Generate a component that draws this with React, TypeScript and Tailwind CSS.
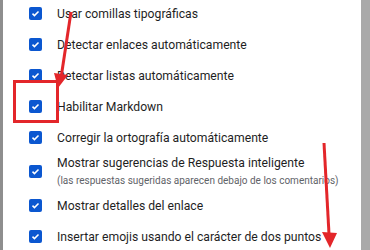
import React from "react";

type Item = { label: string; hint?: string };

const items: Item[] = [
  { label: "Usar comillas tipográficas" },
  { label: "Detectar enlaces automáticamente" },
  { label: "Detectar listas automáticamente" },
  { label: "Habilitar Markdown" },
  { label: "Corregir la ortografía automáticamente" },
  {
    label: "Mostrar sugerencias de Respuesta inteligente",
    hint: "(las respuestas sugeridas aparecen debajo de los comentarios)",
  },
  { label: "Mostrar detalles del enlace" },
  { label: "Insertar emojis usando el carácter de dos puntos" },
];

function Check() {
  return (
    <span className="flex h-[13px] w-[13px] shrink-0 items-center justify-center rounded-[2px] bg-[#0b57d0]">
      <svg width="9" height="9" viewBox="0 0 12 12" fill="none">
        <path d="M2 6.2l2.6 2.6L10 3.4" stroke="white" strokeWidth="2" />
      </svg>
    </span>
  );
}

export default function App() {
  return (
    <div className="flex h-[250px] w-[370px] overflow-hidden bg-white font-['Roboto',sans-serif]">
      <div className="w-[3px] shrink-0 bg-[#8e8e8e]" />
      <div className="relative flex-1">
        <ul className="-mt-[2px] flex flex-col">
          {items.map((it) => (
            <li
              key={it.label}
              className={`flex items-center gap-[15px] pl-[26px] ${it.hint ? "h-[37px]" : "h-[31px]"}`}
            >
              <Check />
              {it.hint ? (
                <div className="flex flex-col">
                  <span className="text-[12.2px] leading-[16px] text-[#1f1f1f] whitespace-nowrap">{it.label}</span>
                  <span className="mt-[3px] text-[10px] leading-[14px] text-[#5f6368] whitespace-nowrap">{it.hint}</span>
                </div>
              ) : (
                <span className="text-[12.2px] leading-[16px] text-[#1f1f1f] whitespace-nowrap">{it.label}</span>
              )}
            </li>
          ))}
        </ul>
        <div className="absolute left-[10px] top-[80px] h-[43px] w-[46px] border-[3px] border-[#e3262a]" />
        <svg className="pointer-events-none absolute left-[-3px] top-0" width="370" height="250">
          <line x1="71" y1="12" x2="61" y2="78" stroke="#e3262a" strokeWidth="3" />
          <polygon points="58,88 54,73 68,75" fill="#e3262a" />
          <line x1="324" y1="143" x2="329" y2="234" stroke="#e3262a" strokeWidth="3" />
          <polygon points="330,248 322,232 337,233" fill="#e3262a" />
        </svg>
      </div>
      <div className="w-[9px] shrink-0 bg-[#a9a9a9]" />
    </div>
  );
}
